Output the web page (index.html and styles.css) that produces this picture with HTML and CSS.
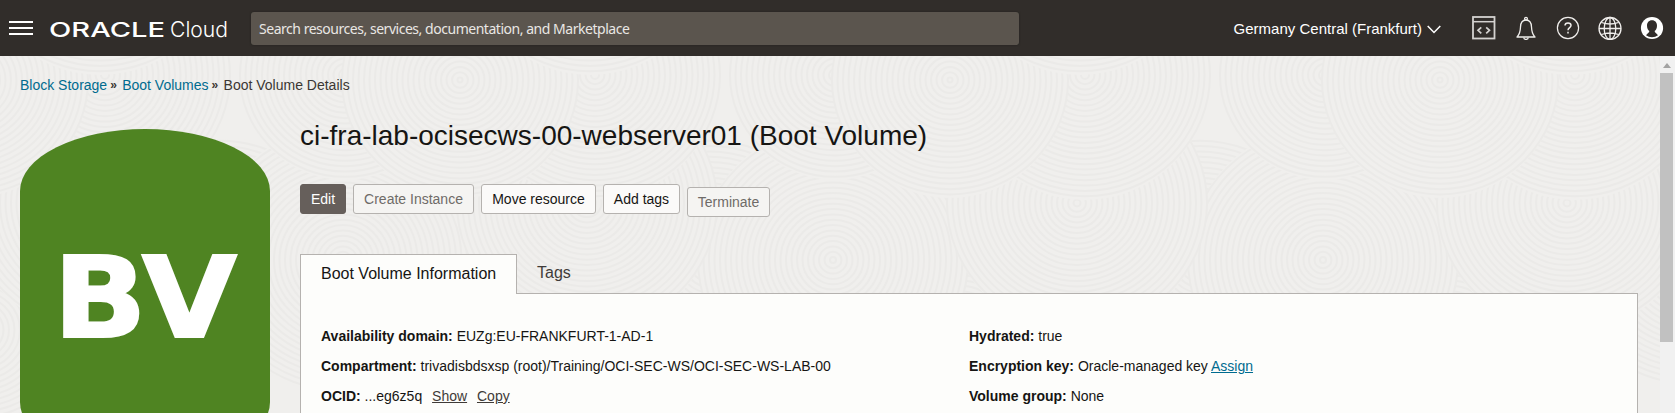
FILE: index.html
```html
<!DOCTYPE html>
<html lang="en">
<head>
<meta charset="utf-8">
<title>Boot Volume Details</title>
<link rel="stylesheet" href="styles.css">
</head>
<body>
<header class="topbar">
  <svg class="menu" width="24" height="16" viewBox="0 0 24 16"><path d="M0 2h24M0 8h24M0 14h24" stroke="#fff" stroke-width="2"/></svg>
  <svg class="logo" width="180" height="24" viewBox="0 0 180 24">
    <text class="logo-oracle" x="-1" y="18.500" textLength="116" lengthAdjust="spacingAndGlyphs">ORACLE</text>
    <text class="logo-cloud" x="120" y="18.500" textLength="58" lengthAdjust="spacingAndGlyphs">Cloud</text>
  </svg>
  <div class="search">Search resources, services, documentation, and Marketplace</div>
  <div class="region"><span>Germany Central (Frankfurt)</span>
    <svg width="14" height="9" viewBox="0 0 14 9"><path d="M.7.900 7 7.500 13.300.900" fill="none" stroke="#fff" stroke-width="1.500"/></svg>
  </div>
  <nav class="icons">
    <svg viewBox="0 0 24 24"><g fill="none" stroke="#d4d2d0"><rect x="1" y="1" width="21.500" height="21.500" stroke-width="1.800"/><path d="M1 5.700h21.500" stroke-width="1.500"/><path d="M9.300 11.300 6 14.300l3.300 3M14.200 11.300l3.300 3-3.300 3" stroke-width="1.700"/></g></svg>
    <svg viewBox="0 0 24 24"><g fill="none" stroke="#f0eeec" stroke-width="1.300"><path d="M2.500 21h19M3.500 20.500C6 17.500 6.300 15.500 6.500 11 6.700 6 8.500 4 12 4s5.300 2 5.500 7c.2 4.500.5 6.500 3 9.500"/><circle cx="12" cy="2.700" r="1.400"/><path d="M9.800 21.500a2.200 1.900 0 0 0 4.400 0"/></g></svg>
    <svg viewBox="0 0 24 24"><g fill="none" stroke="#f0eeec"><circle cx="12" cy="12" r="10.600" stroke-width="1.200"/><path d="M9 9.600C9 7.800 10.300 7 12 7s3 .9 3 2.500c0 2.100-3 2.200-3 4.800M12 15.700v1.900" stroke-width="1.500"/></g></svg>
    <svg viewBox="0 0 24 24"><g fill="none" stroke="#f0eeec" stroke-width="1.300"><circle cx="12" cy="12.500" r="11"/><ellipse cx="12" cy="12.500" rx="5.800" ry="11"/><path d="M12 1.500v22M1 12.500h22M3.500 6.500q8.500 3 17 0M3.500 18.500q8.500-3 17 0"/></g></svg>
    <svg viewBox="0 0 24 24"><circle cx="12" cy="12" r="11.100" fill="#fff"/><path d="M12 4.200c3.300 0 5 2.400 5 5.500 0 2.500-1 4.300-2.400 5.300.3 1.700 1.900 2.500 3.400 4.200a9.500 9.500 0 0 1-12 0c1.500-1.700 3.100-2.500 3.400-4.200C8 14 7 12.200 7 9.700c0-3.100 1.700-5.500 5-5.500z" fill="#312d2a"/></svg>
  </nav>
</header>
<div class="body">
  <svg class="swirls" width="1660" height="357" viewBox="0 56 1660 357" id="swirls"></svg>
  <main class="content">
    <nav class="crumbs"><a>Block Storage</a><i>»</i><a>Boot Volumes</a><i>»</i><span>Boot Volume Details</span></nav>
    <div class="columns">
      <div class="badge"><svg width="250" height="335" viewBox="0 0 250 335"><text x="33" y="208" textLength="184" lengthAdjust="spacingAndGlyphs">BV</text></svg></div>
      <section class="details">
        <h1>ci-fra-lab-ocisecws-00-webserver01 (Boot Volume)</h1>
        <div class="actions">
          <button class="primary b1">Edit</button>
          <button class="off b2">Create Instance</button>
          <button class="b3">Move resource</button>
          <button class="b4">Add tags</button>
          <button class="off low b5">Terminate</button>
        </div>
        <div class="tabs"><div class="tab on">Boot Volume Information</div><div class="tab">Tags</div></div>
        <div class="panel">
          <dl>
            <div><dt>Availability domain:</dt> <dd>EUZg:EU-FRANKFURT-1-AD-1</dd></div>
            <div><dt>Compartment:</dt> <dd>trivadisbdsxsp (root)/Training/OCI-SEC-WS/OCI-SEC-WS-LAB-00</dd></div>
            <div><dt>OCID:</dt> <dd class="ocid">...eg6z5q <a class="dark">Show</a> <a class="dark">Copy</a></dd></div>
          </dl>
          <dl>
            <div><dt>Hydrated:</dt> <dd>true</dd></div>
            <div><dt>Encryption key:</dt> <dd>Oracle-managed key <a>Assign</a></dd></div>
            <div><dt>Volume group:</dt> <dd>None</dd></div>
          </dl>
        </div>
      </section>
    </div>
  </main>
  <div class="scrollbar">
    <svg width="8" height="5" viewBox="0 0 8 5"><path d="M0 5 4 0l4 5z" fill="#a3a3a3"/></svg>
    <div class="thumb"></div>
  </div>
</div>
<script src="swirls.js"></script>
</body>
</html>
```
FILE: styles.css
```css
* { box-sizing: border-box; }
body { margin: 0; height: 413px; overflow: hidden; background: #f0efed; color: #161513; font: 14px/20px "Liberation Sans", Arial, sans-serif; }
.topbar { height: 56px; background: #312d2a; display: flex; align-items: center; padding: 0 11px 0 9px; color: #fff; }
.menu { flex: none; }
.logo { flex: none; margin: 4px 0 0 17px; overflow: visible; }
.logo-oracle { font: 500 20.500px Inter, sans-serif; fill: #fff; }
.logo-cloud { font: 300 22px Inter, sans-serif; fill: #fff; }
.search { flex: none; width: 768px; height: 33px; margin: 1px 0 0 21px; padding: 0 8px; border-radius: 3px; background: #5b554e; color: #e9e7e4; font: 14px/33px "Noto Sans", sans-serif; letter-spacing: -0.47px; box-shadow: 0 0 2px #211e1c; white-space: nowrap; }
.region { margin-left: auto; display: flex; align-items: center; gap: 5px; font-size: 15px; white-space: nowrap; padding-top: 1px; }
.region svg { margin-top: 1px; }
.icons { display: flex; gap: 18px; margin-left: 31px; }
.icons svg { width: 24px; height: 24px; flex: none; }
.body { position: relative; display: flex; height: 357px; overflow: hidden; }
.swirls { position: absolute; left: 0; top: 0; }
.content { position: relative; flex: 1; padding: 19px 22px 0 20px; }
.crumbs { display: flex; line-height: 20px; color: #3b3733; }
.crumbs a, a { color: #006b8f; }
.crumbs i { font-style: normal; font-size: 12px; font-weight: bold; width: 15px; padding-left: 3px; line-height: 20px; }
.columns { display: flex; gap: 30px; margin-top: 10px; }
.badge { flex: none; width: 250px; height: 335px; margin-top: 24px; border-radius: 125px / 62px; background: #4f8422; }
.badge text { font: 700 113px "DejaVu Sans", sans-serif; fill: #fff; stroke: #fff; stroke-width: 2px; }
.details { flex: 1; }
h1 { margin: 11px 0 0; font-size: 28px; font-weight: 400; line-height: 40px; white-space: nowrap; }
.actions { display: flex; align-items: flex-start; gap: 7px; margin-top: 28px; height: 33px; }
button { height: 30px; padding: 0; border: 1px solid #b5b2af; border-radius: 3px; background: #fbfaf9; color: #161513; font: 14px/28px "Liberation Sans", Arial, sans-serif; white-space: nowrap; }
.primary { background: #665f5b; border-color: #665f5b; color: #fff; }
.off { color: #6f6b68; background: #f5f4f2; }
.low { margin-top: 3px; }
.b1 { width: 46px; } .b2 { width: 121px; } .b3 { width: 115px; } .b4 { width: 77px; } .b5 { width: 83px; }
.tabs { display: flex; height: 40px; margin-top: 37px; position: relative; z-index: 1; }
.tab { font-size: 16px; line-height: 37px; padding: 0 20px; color: #3f3b38; }
.tab.on { width: 217px; padding: 0 0 0 20px; line-height: 38px; color: #161513; background: #fdfdfb; border: 1px solid #b5b2af; border-bottom: 0; white-space: nowrap; }
.panel { display: flex; margin-top: -1px; height: 200px; border: 1px solid #b5b2af; background: #fdfdfb; padding: 27px 20px; }
dl { margin: 0; width: 648px; line-height: 30px; white-space: nowrap; }
dt, dd { display: inline; margin: 0; }
dt { font-weight: 700; }
.panel a { text-decoration: underline; }
.panel .dark { color: #3f3b38; margin-left: 6px; }
.scrollbar { position: relative; flex: none; width: 15px; background: #f1f1f1; display: flex; flex-direction: column; }
.scrollbar svg { margin: 7px 0 0 3px; }
.thumb { width: 13px; height: 269px; margin-top: 5px; background: #c1c1c1; }
```
FILE: swirls.js
```js
// Overlapping discs of concentric rings; later discs cover earlier ones.
// The group of discs repeats horizontally every 490px.
const discs = [
  [960, 330, 150], [1200, 262, 125], [833, 260, 135], [1077, 203, 130],
  [835, 75, 105], [1085, 75, 125], [950, 80, 118], [1080, -50, 125]
];
const parts = [];
for (const [x0, y, r] of discs) {
  for (let shift = -980; shift <= 980; shift += 490) {
    const x = x0 + shift;
    parts.push(`<circle cx="${x}" cy="${y}" r="${r}" fill="#f0efed"/>`);
    for (let k = r; k > 2; k -= 5.5) parts.push(`<ellipse cx="${x}" cy="${y}" rx="${k}" ry="${k * 0.97}" fill="none" stroke="#ebeae8" stroke-width="2"/>`);
  }
}
document.getElementById("swirls").innerHTML = parts.join("");
```
